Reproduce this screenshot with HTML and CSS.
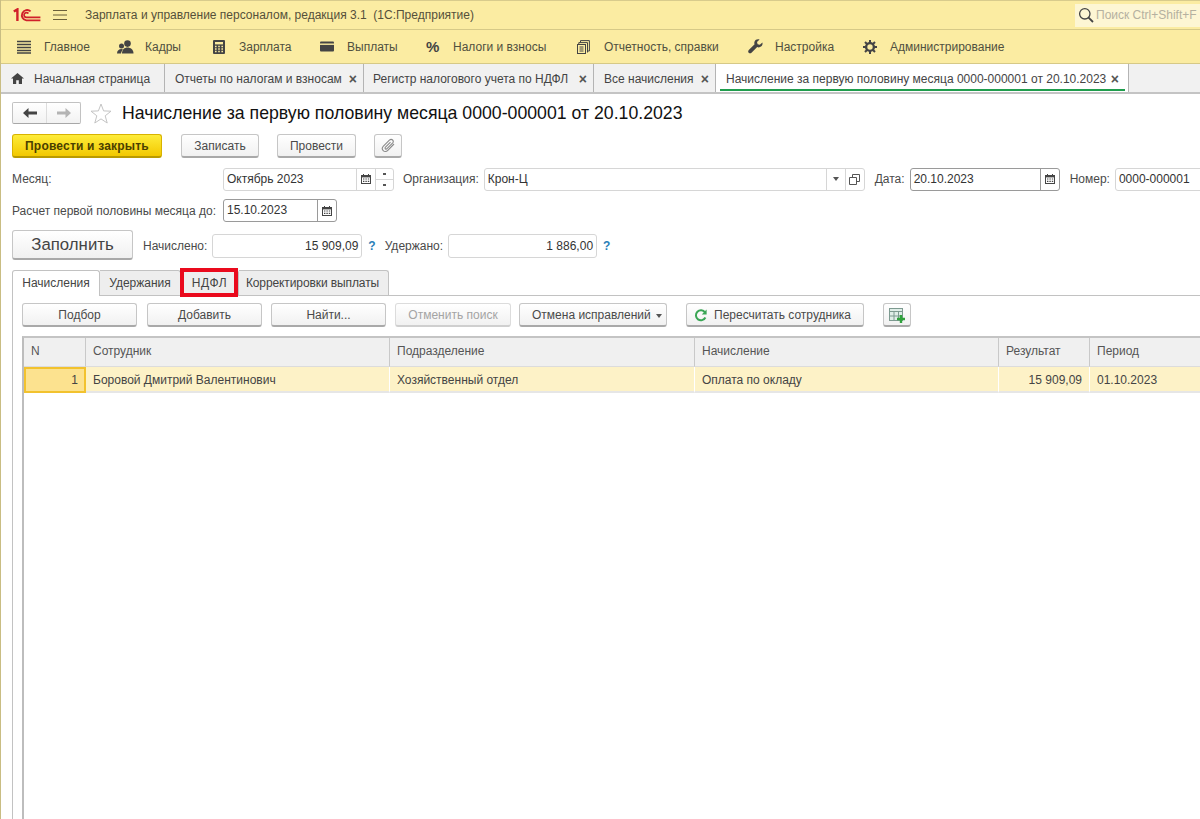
FILE: index.html
```html
<!DOCTYPE html>
<html lang="ru">
<head>
  <meta charset="UTF-8"/>
  <title>Начисление за первую половину месяца</title>
  <link rel="stylesheet" href="styles.css">
</head>
<body>
<div class="app">

  <!-- title bar -->
  <div class="titlebar">
    <svg class="logo" width="28" height="14" viewBox="0 0 28 14">
      <path d="M.8 3.6L4.4 1.4V13" fill="none" stroke="#d0202a" stroke-width="2.4"/>
      <path d="M17.6 3.4A5.2 5.2 0 1 0 13.4 12.4H27.4" fill="none" stroke="#d0202a" stroke-width="1.9"/>
      <path d="M15.4 5.6A2.4 2.4 0 1 0 13.4 9.4H27.4" fill="none" stroke="#d0202a" stroke-width="1.7"/>
    </svg>
    <svg class="burger" width="14" height="12" viewBox="0 0 14 12">
      <path d="M0 1.5H14M0 6H14M0 10.5H14" stroke="#6b5f3a" stroke-width="1"/>
    </svg>
    <span class="app-name">Зарплата и управление персоналом, редакция 3.1&nbsp; (1С:Предприятие)</span>
    <div class="search">
      <svg width="16" height="16" viewBox="0 0 16 16">
        <circle cx="6.8" cy="6.8" r="5.2" fill="none" stroke="#444" stroke-width="1.3"/>
        <path d="M10.6 10.6L15 15" stroke="#444" stroke-width="1.8"/>
      </svg>
      <span>Поиск Ctrl+Shift+F</span>
    </div>
  </div>

  <!-- sections -->
  <div class="menubar">
    <div class="menu-item m-main">
      <svg width="14" height="14" viewBox="0 0 14 14"><path d="M0 1.5H14M0 4.5H14M0 7.5H14M0 10.5H14M0 13H14" stroke="#444" stroke-width="1.6"/></svg>
      <span>Главное</span>
    </div>
    <div class="menu-item m-staff">
      <svg width="17" height="14" viewBox="0 0 17 14"><circle cx="10.5" cy="3.6" r="3.3" fill="#444"/><path d="M5 13.5C5 9.5 7.5 7.5 10.5 7.5S16.5 9.5 16.5 13.5Z" fill="#444"/><circle cx="4.5" cy="6" r="2.5" fill="#444"/><path d="M0 13.5C0 10.5 2 9 4.5 9L6 9.4C4.8 10.5 4.2 12 4 13.5Z" fill="#444"/></svg>
      <span>Кадры</span>
    </div>
    <div class="menu-item m-salary">
      <svg width="12" height="14" viewBox="0 0 12 14"><rect width="12" height="14" rx="1" fill="#444"/><rect x="2" y="2" width="8" height="2.4" fill="#fbeb9f"/><path d="M2 6.5H3.6M5.2 6.5H6.8M8.4 6.5H10M2 9H3.6M5.2 9H6.8M8.4 9H10M2 11.5H3.6M5.2 11.5H6.8M8.4 11.5H10" stroke="#fbeb9f" stroke-width="1.3"/></svg>
      <span>Зарплата</span>
    </div>
    <div class="menu-item m-pay">
      <svg width="14" height="11" viewBox="0 0 14 11"><rect y="0.5" width="14" height="10" rx="1" fill="#444"/><rect y="2.5" width="14" height="1.4" fill="#fbeb9f"/></svg>
      <span>Выплаты</span>
    </div>
    <div class="menu-item m-tax">
      <span class="percent">%</span>
      <span>Налоги и взносы</span>
    </div>
    <div class="menu-item m-report">
      <svg width="13" height="14" viewBox="0 0 13 14"><path d="M3.5 2.5V.6H12.4V11H10.5M1.8 4.5V2.6H10.5V12.5" fill="none" stroke="#444" stroke-width="1"/><rect x=".5" y="4.5" width="8" height="9" fill="none" stroke="#444"/><path d="M2.5 7H6.5M2.5 9H6.5M2.5 11H6.5" stroke="#444"/></svg>
      <span>Отчетность, справки</span>
    </div>
    <div class="menu-item m-settings">
      <svg width="15" height="15" viewBox="0 0 15 15"><path d="M14.4 3.4L11.8 5.8 9.6 5.2 9 3 11.6.6C9.6-.2 7.4.6 6.6 2.4 6.2 3.4 6.2 4.4 6.6 5.2L.8 11C0 11.9 0 13 .7 13.8 1.5 14.6 2.8 14.5 3.5 13.7L9.2 8C10.4 8.6 11.9 8.5 13 7.6 14.3 6.6 14.8 5 14.4 3.4Z" fill="#444"/></svg>
      <span>Настройка</span>
    </div>
    <div class="menu-item m-admin">
      <svg width="14" height="14" viewBox="0 0 14 14"><circle cx="7" cy="7" r="3.9" fill="none" stroke="#444" stroke-width="2.4"/><path d="M7 0V3M7 11V14M0 7H3M11 7H14M2 2L4 4M10 10L12 12M12 2L10 4M4 10L2 12" stroke="#444" stroke-width="2"/></svg>
      <span>Администрирование</span>
    </div>
  </div>

  <!-- open windows -->
  <div class="wintabs">
    <div class="wintab t-home">
      <svg width="13" height="11" viewBox="0 0 13 11"><path d="M6.5 0L13 5.6H11V11H7.8V7.2H5.2V11H2V5.6H0Z" fill="#444"/></svg>
      <span>Начальная страница</span>
    </div>
    <div class="wintab t-rep"><span>Отчеты по налогам и взносам</span><i class="close">×</i></div>
    <div class="wintab t-reg"><span>Регистр налогового учета по НДФЛ</span><i class="close">×</i></div>
    <div class="wintab t-all"><span>Все начисления</span><i class="close">×</i></div>
    <div class="wintab t-doc active"><span>Начисление за первую половину месяца 0000-000001 от 20.10.2023</span><i class="close">×</i></div>
  </div>

  <div class="form">
    <div class="heading">
      <div class="nav">
        <span class="nav-btn"><svg width="14" height="10" viewBox="0 0 14 10"><path d="M0 5L5.5 0V3.6H14V6.4H5.5V10Z" fill="#444"/></svg></span>
        <span class="nav-btn"><svg width="14" height="10" viewBox="0 0 14 10"><path d="M14 5L8.5 0V3.6H0V6.4H8.5V10Z" fill="#b4b4b4"/></svg></span>
      </div>
      <svg class="star" width="22" height="21" viewBox="0 0 22 21"><path d="M11 1L13.6 7.9 21 8.2 15.2 12.8 17.2 20 11 15.9 4.8 20 6.8 12.8 1 8.2 8.4 7.9Z" fill="#fff" stroke="#c4c4c4"/></svg>
      <h1>Начисление за первую половину месяца 0000-000001 от 20.10.2023</h1>
    </div>

    <div class="actions">
      <button class="btn primary">Провести и закрыть</button>
      <button class="btn b-save">Записать</button>
      <button class="btn b-post">Провести</button>
      <button class="btn b-clip">
        <svg width="15" height="15" viewBox="0 0 15 15"><path d="M13 6L6.8 12.4C5.4 13.8 3.4 13.8 2.2 12.6 1 11.4 1.1 9.5 2.4 8.2L8.4 2.2C9.4 1.2 10.8 1.2 11.6 2 12.5 2.9 12.4 4.2 11.5 5.2L6 10.7C5.5 11.2 4.8 11.2 4.4 10.8 4 10.4 4 9.7 4.5 9.2L9.5 4.2" fill="none" stroke="#8a8a8a" stroke-width="1.1"/></svg>
      </button>
    </div>

    <div class="row r-month">
      <label class="l-month">Месяц:</label>
      <div class="field f-month">
        <span class="val">Октябрь 2023</span>
        <span class="cell"><svg class="cal" width="10" height="10" viewBox="0 0 10 10"><use href="#cal-icon"/></svg></span>
        <span class="cell spin"><b class="up"></b><b class="down"></b></span>
      </div>
      <label class="l-org">Организация:</label>
      <div class="field f-org">
        <span class="val">Крон-Ц</span>
        <span class="cell"><i class="tri"></i></span>
        <span class="cell"><svg width="11" height="11" viewBox="0 0 11 11"><path d="M3.5 3V.5H10.5V7.5H8M.5 3.5H7.5V10.5H.5Z" fill="none" stroke="#555"/></svg></span>
      </div>
      <label class="l-date">Дата:</label>
      <div class="field focus f-date">
        <span class="val">20.10.2023</span>
        <span class="cell"><svg class="cal" width="10" height="10" viewBox="0 0 10 10"><use href="#cal-icon"/></svg></span>
      </div>
      <label class="l-num">Номер:</label>
      <div class="field f-num"><span class="val">0000-000001</span></div>
    </div>

    <div class="row r-half">
      <label class="l-half">Расчет первой половины месяца до:</label>
      <div class="field focus f-half">
        <span class="val">15.10.2023</span>
        <span class="cell"><svg class="cal" width="10" height="10" viewBox="0 0 10 10"><use href="#cal-icon"/></svg></span>
      </div>
    </div>

    <div class="row r-fill">
      <button class="btn fill">Заполнить</button>
      <label class="l-acc">Начислено:</label>
      <div class="field f-sum f-acc"><span class="val">15 909,09</span></div>
      <span class="help">?</span>
      <label class="l-ded">Удержано:</label>
      <div class="field f-sum f-ded"><span class="val">1 886,00</span></div>
      <span class="help">?</span>
    </div>

    <div class="page-tabs">
      <div class="ptab active t1">Начисления</div>
      <div class="ptab t2">Удержания</div>
      <div class="ptab t3">НДФЛ<span class="mark"></span></div>
      <div class="ptab t4">Корректировки выплаты</div>
    </div>

    <div class="panel">
      <div class="toolbar">
        <button class="btn b-w1">Подбор</button>
        <button class="btn b-w2">Добавить</button>
        <button class="btn b-w3">Найти...</button>
        <button class="btn b-w4 disabled">Отменить поиск</button>
        <button class="btn b-w5">Отмена исправлений<i class="tri"></i></button>
        <button class="btn b-w6">
          <svg width="13" height="13" viewBox="0 0 13 13"><path d="M11 3.4A5 5 0 1 0 11.4 8.5" fill="none" stroke="#3aa655" stroke-width="2"/><path d="M12.6 .6V5.4H7.8Z" fill="#3aa655"/></svg>
          <span>Пересчитать сотрудника</span>
        </button>
        <button class="btn b-w7">
          <svg width="17" height="15" viewBox="0 0 17 15"><rect x=".5" y=".5" width="13" height="12" fill="#dfeee8" stroke="#7d9a90"/><path d="M.5 3.5H13.5M5 3.5V12.5M9.5 3.5V12.5M.5 8H13.5" stroke="#7d9a90"/><path d="M12 7V15M8 11H16" stroke="#2fa23c" stroke-width="2.4"/></svg>
        </button>
      </div>

      <div class="grid">
        <div class="gh">N</div>
        <div class="gh">Сотрудник</div>
        <div class="gh">Подразделение</div>
        <div class="gh">Начисление</div>
        <div class="gh">Результат</div>
        <div class="gh">Период</div>
        <div class="gc num current">1</div>
        <div class="gc">Боровой Дмитрий Валентинович</div>
        <div class="gc">Хозяйственный отдел</div>
        <div class="gc">Оплата по окладу</div>
        <div class="gc num">15 909,09</div>
        <div class="gc">01.10.2023</div>
      </div>
    </div>
  </div>
</div>

<svg width="0" height="0" class="defs">
  <symbol id="cal-icon" viewBox="0 0 10 10">
    <path d="M2.5 0V2M7.5 0V2" stroke="#444"/>
    <rect x=".5" y="1.5" width="9" height="8" fill="none" stroke="#444"/>
    <rect x="0" y="1" width="10" height="2.4" fill="#444"/>
    <path d="M2 5H3.4M4.4 5H5.8M6.8 5H8.2M2 7.4H3.4M4.4 7.4H5.8M6.8 7.4H8.2" stroke="#444" stroke-width="1.2"/>
  </symbol>
</svg>
</body>
</html>
```

FILE: styles.css
```css
* { box-sizing: border-box; }
html, body { margin: 0; padding: 0; height: 100%; }
body {
  font-family: "Liberation Sans", Arial, sans-serif;
  font-size: 12px;
  color: #4a4a4a;
  background: #fff;
  overflow: hidden;
}
.defs { position: absolute; }
.app { width: 1200px; height: 819px; overflow: hidden; border-left: 1px solid #c9bd83; }

/* title bar */
.titlebar {
  height: 30px; margin-left: -1px;
  display: flex; align-items: center;
  background: #fbeca2;
  border-top: 1px solid #d8cb8c;
  border-bottom: 1px solid #d6c987;
}
.logo { margin-left: 13px; }
.burger { margin-left: 12px; }
.app-name { margin-left: 18px; color: #55503a; }
.search {
  margin-left: auto; width: 125px; height: 23px;
  display: flex; align-items: center; gap: 2px; padding-left: 3px;
  background: #fdf6d4; color: #b5b1a0; white-space: nowrap;
}

/* section menu */
.menubar {
  height: 34px; margin-left: -1px; padding-left: 17px;
  display: flex; align-items: center;
  background: #fbeca2;
  border-bottom: 1px solid #d6c987;
}
.menu-item { display: flex; align-items: center; flex: none; color: #50503f; white-space: nowrap; }
.m-main { width: 100px; gap: 13px; }
.m-staff { width: 96px; gap: 11px; }
.m-salary { width: 107px; gap: 14px; }
.m-pay { width: 106px; gap: 13px; }
.m-tax { width: 151px; gap: 13px; }
.m-report { width: 171px; gap: 14px; }
.m-settings { width: 115px; gap: 12px; }
.m-admin { gap: 13px; }
.percent { font-size: 15px; font-weight: bold; color: #444; width: 14px; }

/* window tabs */
.wintabs {
  height: 30px; margin-left: -1px;
  display: flex;
  background: #f1f1f1;
  border-bottom: 2px solid #c4c4c4;
}
.wintab {
  display: flex; align-items: center; justify-content: space-between;
  height: 28px; padding: 1px 6px 0 10px;
  border-right: 1px solid #b4b4b4;
  color: #444; white-space: nowrap;
}
.t-home { width: 165px; justify-content: flex-start; gap: 10px; padding-left: 11px; }
.t-rep { width: 199px; }
.t-reg { width: 230px; padding-left: 9px; }
.t-all { width: 122px; }
.t-doc { width: 413px; padding-right: 9px; }
.wintab.active { background: #fff; position: relative; }
.wintab.active::after {
  content: ""; position: absolute; left: 4px; right: 3px; bottom: 1px;
  height: 2px; background: #1f9d4d;
}
.close { font-style: normal; font-weight: bold; font-size: 14px; color: #555; }

/* form */
.form { padding-top: 8px; padding-left: 1px; }
.heading { display: flex; align-items: center; height: 22px; margin-left: 10px; }
.nav {
  display: flex; width: 69px; height: 22px;
  border: 1px solid #c2c2c2; border-bottom-color: #a8a8a8; border-radius: 2px;
  background: linear-gradient(#fff, #f2f2f2);
}
.nav-btn { flex: 1; display: flex; align-items: center; justify-content: center; }
.nav-btn + .nav-btn { border-left: 1px solid #ddd; }
.star { margin-left: 9px; }
h1 { margin: 0 0 0 10px; font-size: 17.7px; font-weight: normal; color: #111; white-space: nowrap; }

.btn {
  font: inherit; color: #4a4a4a;
  height: 24px; padding: 0;
  display: inline-flex; align-items: center; justify-content: center;
  background: linear-gradient(#fff, #f1f1f1);
  border: 1px solid #c6c6c6; border-bottom: 2px solid #a9a9a9; border-radius: 3px;
  white-space: nowrap;
}
.actions { display: flex; height: 24px; margin: 10px 0 0 10px; }
.primary {
  width: 150px; font-weight: bold; color: #4a3f00; letter-spacing: .2px;
  background: linear-gradient(#fdec3a, #f3c800);
  border-color: #d8b300; border-bottom-color: #b99a00;
}
.b-save { width: 78px; margin-left: 19px; }
.b-post { width: 79px; margin-left: 18px; }
.b-clip { width: 28px; margin-left: 18px; }

.row { display: flex; align-items: center; white-space: nowrap; }
.field {
  height: 23px; display: flex; align-items: stretch; flex: none;
  border: 1px solid #d6d6d6; border-radius: 3px; background: #fff;
  color: #333;
}
.field.focus { border-color: #9a9a9a; }
.val { flex: 1; padding-left: 3px; line-height: 21px; }
.cell { width: 19px; display: flex; align-items: center; justify-content: center; border-left: 1px solid #d6d6d6; }
.focus .cell { border-left-color: #9a9a9a; }
.spin { flex-direction: column; }
.spin b { flex: 1; width: 100%; display: flex; align-items: center; justify-content: center; }
.spin b + b { border-top: 1px solid #d6d6d6; }
.spin b::after { content: ""; width: 3px; height: 2px; background: #555; }
.tri {
  display: inline-block; width: 0; height: 0;
  border: 3px solid transparent; border-top: 4px solid #555; border-bottom: 0;
}

.r-month { margin-top: 9px; height: 24px; }
.l-month { width: 211px; margin-left: 10px; flex: none; }
.f-month { width: 171px; }
.f-month .cell + .cell { width: 18px; }
.l-org { margin-left: 9px; }
.f-org { width: 381px; margin-left: 5px; }
.l-date { margin-left: 10px; }
.f-date { width: 150px; margin-left: 5px; }
.l-num { margin-left: 10px; }
.f-num { width: 120px; margin-left: 5px; }

.r-half { margin-top: 8px; height: 23px; }
.l-half { margin-left: 10px; }
.f-half { width: 114px; margin-left: 7px; }

.r-fill { margin-top: 8px; height: 30px; }
.fill {
  width: 121px; height: 30px; margin-left: 10px; padding-top: 1px;
  font-size: 16.8px; color: #444;
}
.l-acc { margin-left: 10px; padding-top: 1px; }
.f-sum { height: 24px; margin-top: 1px; }
.f-sum .val { text-align: right; padding-right: 3px; line-height: 22px; }
.f-acc { width: 150px; margin-left: 5px; }
.help { margin: 1px 6px 0; font-weight: bold; color: #2b7fb8; }
.l-ded { margin-left: 3px; padding-top: 1px; }
.f-ded { width: 149px; margin-left: 5px; }

/* inner tabs */
.page-tabs { display: flex; align-items: flex-end; height: 26px; margin: 9px 0 0 10px; }
.ptab {
  height: 25px; display: flex; align-items: center; justify-content: center;
  padding-bottom: 1px;
  background: #eeeeee; border: 1px solid #c2c2c2; border-bottom: 0;
  border-left: 0; border-radius: 0 3px 0 0; color: #444;
}
.ptab.active {
  height: 26px; background: #fff; border-left: 1px solid #c2c2c2;
  border-radius: 3px 3px 0 0; margin-bottom: -1px; position: relative; z-index: 1;
}
.t1 { width: 88px; }
.t2 { width: 81px; }
.t3 { width: 58px; position: relative; letter-spacing: .6px; }
.t4 { width: 150px; letter-spacing: -.1px; padding-right: 2px; }
.mark {
  position: absolute; left: -1px; top: -3px; right: 0; bottom: -2px;
  border: 4px solid #ea0a1d;
}

.panel {
  height: 540px; margin-left: 10px;
  border-top: 1px solid #c2c2c2; border-left: 1px solid #c2c2c2;
  padding: 7px 0 0 9px;
}
.toolbar { display: flex; height: 25px; }
.toolbar .btn { padding-top: 1px; }
.b-w1 { width: 115px; }
.b-w2 { width: 115px; margin-left: 10px; }
.b-w3 { width: 115px; margin-left: 9px; }
.b-w4 { width: 116px; margin-left: 9px; }
.b-w5 { width: 148px; margin-left: 8px; gap: 5px; justify-content: flex-start; padding-left: 12px; }
.b-w5 .tri { margin-top: 1px; }
.b-w6 { width: 178px; margin-left: 19px; gap: 7px; justify-content: flex-start; padding-left: 7px; }
.b-w7 { width: 28px; margin-left: 19px; }
.disabled { color: #a4a4a4; border-color: #dcdcdc; border-bottom-color: #cfcfcf; }

/* table */
.grid {
  margin-top: 8px; height: 500px; width: 1300px;
  display: grid;
  grid-template-columns: 62px 304px 305px 304px 91px 1fr;
  grid-template-rows: 29px 26px;
  align-content: start;
  border-top: 2px solid #c4c4c4; border-left: 2px solid #bdbdbd;
}
.gh {
  background: #f0f0f0; padding: 0 7px; line-height: 27px;
  border-right: 1px solid #c9c9c9; border-bottom: 1px solid #dcdcdc;
  color: #555;
}
.gc {
  background: #fdf2c7; padding: 0 7px; line-height: 26px;
  border-right: 1px solid #fff; border-bottom: 2px solid #e6e6e6;
  color: #444; white-space: nowrap;
}
.num { text-align: right; }
.current { background: #fce28f; border: 2px solid #f2c22e; line-height: 22px; padding-right: 6px; }
```
